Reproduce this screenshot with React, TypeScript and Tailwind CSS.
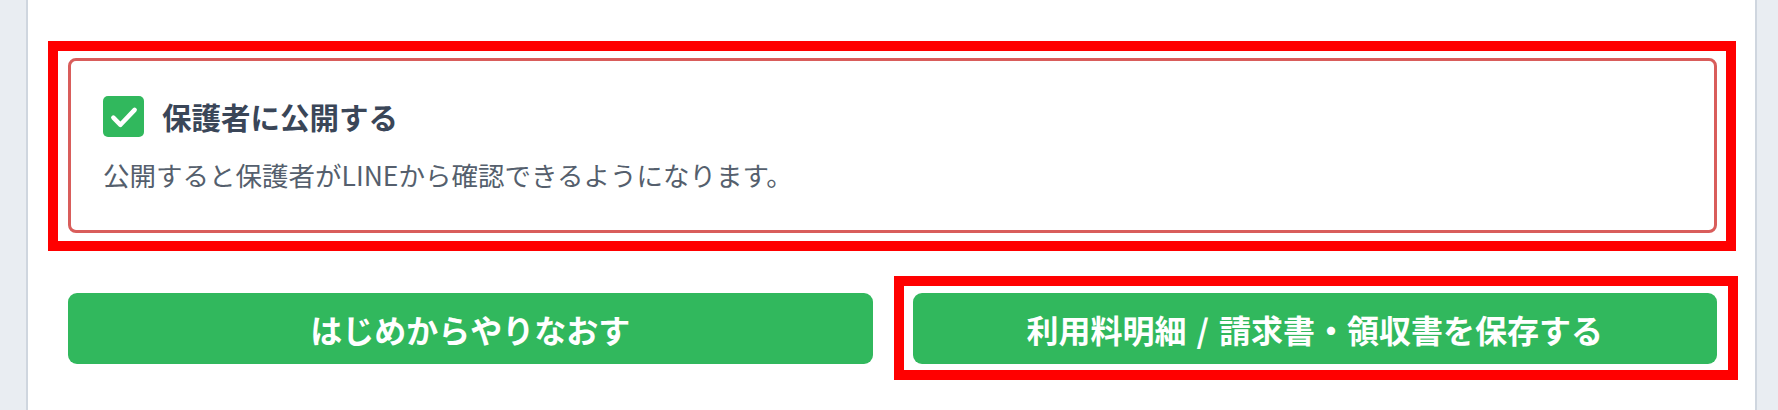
import type { ReactNode } from "react";

const jp = "font-['Noto_Sans_CJK_JP','Noto_Sans',sans-serif]";

function CheckMark() {
  return (
    <svg viewBox="0 0 24 24" className="h-[34px] w-[34px]" fill="none" stroke="white" strokeWidth={3.2} strokeLinecap="round" strokeLinejoin="round">
      <path d="M4.5 12.5l5 5L19.5 7" />
    </svg>
  );
}

function PublishOption() {
  return (
    <div className="relative">
      <div className="rounded-[8px] border-[3px] border-[#d95d5b] bg-white pl-[32px] pr-[32px] pt-[35px] pb-[37px]">
        <label className="flex items-center gap-[18px]">
          <span className="flex h-[41px] w-[41px] items-center justify-center rounded-[5px] bg-[#31b85d]">
            <CheckMark />
          </span>
          <span className="text-[29.5px] font-bold leading-none text-[#3a4658]">保護者に公開する</span>
        </label>
        <p className="mt-[20px] text-[26.5px] leading-[36px] text-[#555f6d]">
          公開すると保護者がLINEから確認できるようになります。
        </p>
      </div>
      {/* annotation frame */}
      <div className="pointer-events-none absolute -left-[20px] -top-[17px] -right-[19px] -bottom-[18px] border-[10px] border-[#ff0000]" />
    </div>
  );
}

function ActionButton({ children, marked }: { children: ReactNode; marked?: boolean }) {
  return (
    <div className="relative flex-1">
      <button className="flex h-[71px] w-full items-center justify-center rounded-[9px] bg-[#31b85d] text-[32px] font-bold text-white">
        {children}
      </button>
      {marked && (
        <div className="pointer-events-none absolute -left-[19px] -top-[17px] -right-[21px] -bottom-[16px] border-[10px] border-[#ff0000]" />
      )}
    </div>
  );
}

export default function App() {
  return (
    <div className={`flex h-[410px] w-full bg-[#e9edf2] ${jp}`}>
      <div className="w-[26px] shrink-0" />
      <div className="flex flex-1 flex-col border-x-[2px] border-[#cfd6df] bg-white pl-[40px] pr-[38px] pt-[58px]">
        <PublishOption />
        <div className="mt-[60px] flex gap-[40px]">
          <ActionButton>はじめからやりなおす</ActionButton>
          <ActionButton marked>
            利用料明細<span className="mx-[10px]">/</span>請求書・領収書を保存する
          </ActionButton>
        </div>
      </div>
      <div className="w-[21px] shrink-0" />
    </div>
  );
}
